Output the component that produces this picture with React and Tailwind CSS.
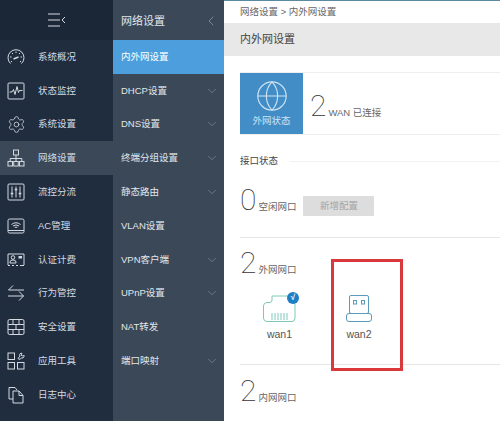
import { ChevronDown, ChevronLeft, Settings, Globe } from "lucide-react";

const Icon = ({ children }) => (
  <svg width="18" height="18" viewBox="0 0 18 18" fill="none" stroke="currentColor" strokeWidth="1">
    {children}
  </svg>
);

const leftItems = [
  {
    label: "系统概况",
    icon: (
      <Icon>
        <path d="M3.5 15.5A8 8 0 1 1 14.5 15.5" />
        <path d="M4 13.5h1M13 13.5h1M3 9h1.5M13.5 9H15M9 3.5V5M5 5l1 1M13 5l-1 1" />
        <path d="M6.5 11l5-2" strokeWidth="1.4" />
      </Icon>
    ),
  },
  {
    label: "状态监控",
    icon: (
      <Icon>
        <rect x="1" y="1" width="16" height="16" rx="1" />
        <path d="M2.5 10h2.5l1.5-2.5 1.5 5 2-8 1.5 6 1-2h3" />
      </Icon>
    ),
  },
  { label: "系统设置", icon: <Settings size={19} strokeWidth={1} /> },
  {
    label: "网络设置",
    active: true,
    icon: (
      <Icon>
        <rect x="6.5" y="1" width="5" height="5" />
        <rect x="1" y="12.5" width="4.5" height="4.5" />
        <rect x="6.75" y="12.5" width="4.5" height="4.5" />
        <rect x="12.5" y="12.5" width="4.5" height="4.5" />
        <path d="M9 6v6.5M3.2 12.5V9.5h11.6v3" />
      </Icon>
    ),
  },
  {
    label: "流控分流",
    icon: (
      <Icon>
        <rect x="1" y="1" width="16" height="16" rx="1" />
        <path d="M5 3.5v11M9 3.5v11M13 3.5v11" />
        <path d="M3.7 10.5h2.6M7.7 6.5h2.6M11.7 10.5h2.6" strokeWidth="1.6" />
      </Icon>
    ),
  },
  {
    label: "AC管理",
    icon: (
      <Icon>
        <rect x="1" y="2" width="16" height="14" rx="1.5" />
        <path d="M1 13.5h16" />
        <path d="M4.5 7.5q4.5-3.5 9 0M6 9q3-2.2 6 0M7.7 10.5q1.3-.9 2.6 0" />
      </Icon>
    ),
  },
  {
    label: "认证计费",
    icon: (
      <Icon>
        <path d="M1 14V3h16v11" />
        <path d="M1 14.5h2M5 14.5h2M9 14.5h2M13 14.5h4" />
        <circle cx="6" cy="6.5" r="1.8" />
        <path d="M3 12v-1q0-2 3-2t3 2v1z" />
        <rect x="11.5" y="5" width="3.5" height="2.5" fill="currentColor" stroke="none" />
      </Icon>
    ),
  },
  {
    label: "行为管控",
    icon: (
      <Icon>
        <path d="M17 6H1.5M6 1.5L1.5 6" />
        <path d="M1 12h15.5M12 7.5l4.5 4.5-4.5 4.5" />
      </Icon>
    ),
  },
  {
    label: "安全设置",
    icon: (
      <Icon>
        <rect x="1" y="1.5" width="16" height="15" rx="1.5" />
        <path d="M1 6.5h16M1 11.5h16M6 1.5v5M12 1.5v5M9 6.5v5M6 11.5v5M12 11.5v5" />
      </Icon>
    ),
  },
  {
    label: "应用工具",
    icon: (
      <Icon>
        <rect x="1" y="1" width="6.5" height="6.5" />
        <rect x="1" y="10.5" width="6.5" height="6.5" />
        <rect x="10.5" y="10.5" width="6.5" height="6.5" />
        <path d="M11 6.5l2-2.5-.5-1.5 1.5-1.5 1 .5-1 1.5 1.5 1 1-1 .8 1-1.3 2-1.5-.2-1.5 1.7z" />
      </Icon>
    ),
  },
  {
    label: "日志中心",
    icon: (
      <Icon>
        <path d="M6 13H2V1.5h6L10 4" />
        <path d="M6 5h6l4 4.5v7.5H6z" />
        <path d="M12 5v4.5h4" />
      </Icon>
    ),
  },
];

const subItems = [
  { label: "内外网设置", active: true },
  { label: "DHCP设置", arrow: true },
  { label: "DNS设置", arrow: true },
  { label: "终端分组设置", arrow: true },
  { label: "静态路由", arrow: true },
  { label: "VLAN设置" },
  { label: "VPN客户端", arrow: true },
  { label: "UPnP设置", arrow: true },
  { label: "NAT转发" },
  { label: "端口映射", arrow: true },
];

const Count = ({ value, label }) => (
  <div className="flex items-baseline">
    <span className="font-['Roboto',sans-serif] font-thin text-[30px] leading-[30px] text-[#333]">{value}</span>
    <span className="ml-[2px] text-[9.5px] text-[#666]">{label}</span>
  </div>
);

export default function App() {
  return (
    <div className="flex h-[421px] w-[500px] overflow-hidden bg-white font-['Liberation_Sans','Noto_Sans_CJK_SC',sans-serif]">
      <aside className="w-[113px] shrink-0 bg-[#1f2d3f] text-[#d5dae0]">
        <div className="flex h-[40px] items-center justify-center bg-[#1b2736]">
          <svg width="18" height="14" viewBox="0 0 18 14" fill="none" stroke="#d5dae0" strokeWidth="1">
            <path d="M0 1h12M0 7h12M0 13h12M17 4l-3 3 3 3" />
          </svg>
        </div>
        {leftItems.map((item) => (
          <div key={item.label} className={`flex h-[33.8px] items-center ${item.active ? "bg-[#3a4858]" : ""}`}>
            <div className="flex w-[32px] justify-center">{item.icon}</div>
            <span className="ml-[6px] text-[9.5px]">{item.label}</span>
          </div>
        ))}
      </aside>

      <nav className="w-[111px] shrink-0 bg-[#3a4858] text-[#e3e6ea]">
        <div className="flex h-[40px] items-center justify-between pl-[8px] pr-[5px] pt-[2px] text-[11px]">
          网络设置
          <ChevronLeft size={16} strokeWidth={1} className="text-[#9aa4af]" />
        </div>
        {subItems.map((item) => (
          <div
            key={item.label}
            className={`flex h-[33.8px] items-center justify-between pl-[8px] pr-[5px] text-[9.5px] ${item.active ? "bg-[#4c9fdc] text-white" : ""}`}
          >
            {item.label}
            {item.arrow && <ChevronDown size={14} strokeWidth={1} className="text-[#8b96a3]" />}
          </div>
        ))}
      </nav>

      <main className="min-w-0 flex-1 border-t border-[#5b8aa0] text-[#555]">
        <div className="flex h-[22px] items-center pl-[16px] text-[9.5px] text-[#666]">网络设置 &gt; 内外网设置</div>
        <div className="flex h-[33px] items-center bg-[#e8e8e8] pl-[16px] text-[11px] text-[#444]">内外网设置</div>

        <div className="pl-[16px]">
          <div className="mt-[16px] flex h-[63px] border-y border-[#eeeeee]">
            <div className="flex w-[63px] shrink-0 flex-col items-center justify-center bg-[#428dc6] text-[#cfe4f5]">
              <Globe size={34} strokeWidth={0.8} />
              <span className="mt-[1px] text-[9.5px]">外网状态</span>
            </div>
            <div className="ml-[7px] mt-[18px]">
              <Count value="2" label="WAN 已连接" />
            </div>
          </div>

          <div className="mt-[19px] flex h-[14px] items-center text-[9.5px] text-[#444]">
            接口状态
            <div className="ml-[12px] h-px flex-1 bg-[#f2f2f2]" />
          </div>

          <div className="mt-[17px] flex items-start">
            <Count value="0" label="空闲网口" />
            <button className="ml-[7px] mt-[11px] h-[20px] w-[71px] rounded-[1px] bg-[#dddddd] text-[9.5px] text-[#a5a5a5]">新增配置</button>
          </div>

          <div className="mt-[21px] h-px bg-[#e6e6e6]" />

          <div className="mt-[10px]">
            <Count value="2" label="外网网口" />
          </div>

          <div className="mt-[17px] flex">
            <div className="ml-[23px] flex w-[33px] flex-col items-center">
              <div className="relative">
                <svg width="33" height="27" viewBox="0 0 33 27" fill="none" stroke="#7cc8b8" strokeWidth="1">
                  <path d="M4 7.5h3l2-1.5V1h18v6q5 0 5 3v13q0 3.5-3 3.5H4q-3.5 0-3.5-3.5V11q0-3.5 3.5-3.5z" />
                  <path d="M9 25v-7M12 25v-7M15 25v-7M18 25v-7M21 25v-7M24 25v-7" />
                </svg>
                <div className="absolute -right-[3px] -top-[3px] flex h-[12px] w-[12px] items-center justify-center rounded-full bg-[#1f7fc4] text-[8px] font-bold leading-none text-white">
                  √
                </div>
              </div>
              <span className="mt-[5px] text-[10.5px] leading-[14px] text-[#555]">wan1</span>
            </div>
            <div className="ml-[46px] flex w-[34px] flex-col items-center">
              <svg width="26" height="27" viewBox="0 0 26 27" fill="none" stroke="#5b9ab8" strokeWidth="1">
                <rect x="3.5" y="0.5" width="19" height="18" rx="1.5" />
                <rect x="7.5" y="5.5" width="3" height="3.5" />
                <rect x="15.5" y="5.5" width="3" height="3.5" />
                <rect x="0.5" y="18.5" width="25" height="8" rx="2.5" />
              </svg>
              <span className="mt-[5px] text-[10.5px] leading-[14px] text-[#555]">wan2</span>
            </div>
          </div>

          <div className="mt-[23px] h-px bg-[#e6e6e6]" />

          <div className="mt-[11px]">
            <Count value="2" label="内网网口" />
          </div>
        </div>
      </main>

      <div className="absolute left-[331px] top-[259px] h-[112px] w-[72px] border-[3px] border-[#d9393a]" />
    </div>
  );
}
